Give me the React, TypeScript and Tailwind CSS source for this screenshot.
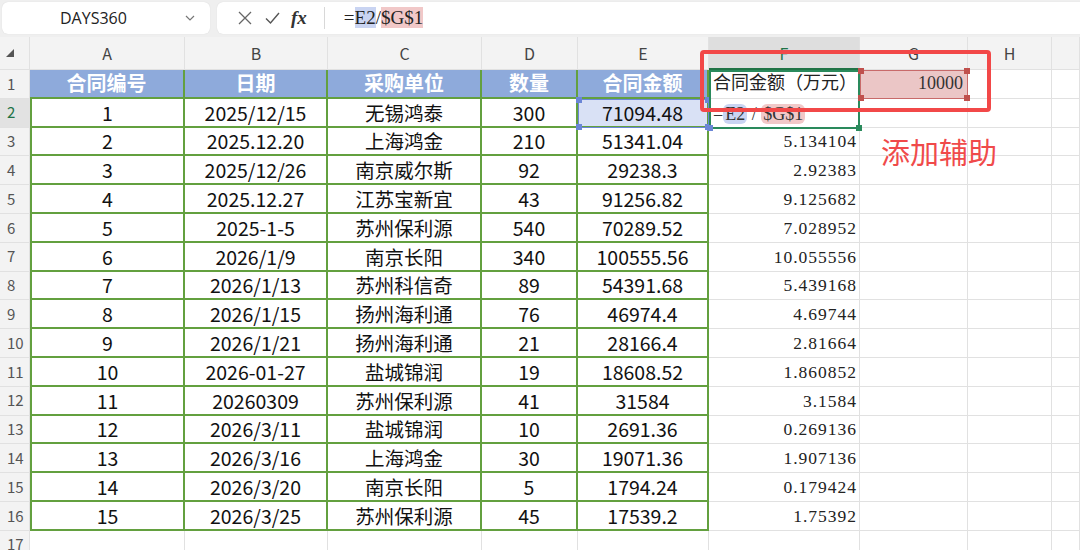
import React from 'react';

type Row = [string, string, string, string, string, string];

const rows: Row[] = [
  ['1', '2025/12/15', '无锡鸿泰', '300', '71094.48', ''],
  ['2', '2025.12.20', '上海鸿金', '210', '51341.04', '5.134104'],
  ['3', '2025/12/26', '南京威尔斯', '92', '29238.3', '2.92383'],
  ['4', '2025.12.27', '江苏宝新宜', '43', '91256.82', '9.125682'],
  ['5', '2025-1-5', '苏州保利源', '540', '70289.52', '7.028952'],
  ['6', '2026/1/9', '南京长阳', '340', '100555.56', '10.055556'],
  ['7', '2026/1/13', '苏州科信奇', '89', '54391.68', '5.439168'],
  ['8', '2026/1/15', '扬州海利通', '76', '46974.4', '4.69744'],
  ['9', '2026/1/21', '扬州海利通', '21', '28166.4', '2.81664'],
  ['10', '2026-01-27', '盐城锦润', '19', '18608.52', '1.860852'],
  ['11', '20260309', '苏州保利源', '41', '31584', '3.1584'],
  ['12', '2026/3/11', '盐城锦润', '10', '2691.36', '0.269136'],
  ['13', '2026/3/16', '上海鸿金', '30', '19071.36', '1.907136'],
  ['14', '2026/3/20', '南京长阳', '5', '1794.24', '0.179424'],
  ['15', '2026/3/25', '苏州保利源', '45', '17539.2', '1.75392'],
];

const sans = { fontFamily: '"Noto Sans CJK SC", "Noto Sans", sans-serif' };
const serif = { fontFamily: '"Liberation Serif", "Noto Sans CJK SC", serif' };

const headers = ['合同编号', '日期', '采购单位', '数量', '合同金额'];
const cols = ['A', 'B', 'C', 'D', 'E', 'F', 'G', 'H', ''];

// grid cell classes
const gray = 'border-r border-b border-[#e1e1e1]';
const green = 'border-r-2 border-b-2 border-[#63a03f]';

const Handle = ({ className }: { className: string }) => (
  <div className={`absolute w-[6px] h-[6px] ${className}`} />
);

export default function App() {
  return (
    <div className="relative w-[1080px] h-[550px] overflow-hidden bg-white text-[#1a1a1a]" style={sans}>
      {/* Toolbar */}
      <div className="flex h-[37px] gap-[7px] bg-[#efefef] pt-[2px] pb-[3px] pl-[2px]">
        <div className="flex w-[208px] items-center rounded-[6px] bg-white pl-[58px] pr-[14px] shadow-[0_0_1px_rgba(0,0,0,0.15)]">
          <span className="flex-1 text-[16px] text-[#222]" style={{ fontFamily: '"Open Sans", "Noto Sans", sans-serif' }}>
            DAYS360
          </span>
          <svg width="12" height="12" viewBox="0 0 12 12" fill="none" stroke="#777" strokeWidth="1.2">
            <path d="M2 4l4 4 4-4" />
          </svg>
        </div>
        <div className="flex flex-1 items-center rounded-l-[6px] bg-white pl-[20px] shadow-[0_0_1px_rgba(0,0,0,0.15)]">
          <svg width="16" height="16" viewBox="0 0 16 16" fill="none" stroke="#666" strokeWidth="1.3">
            <path d="M2 2l12 12M14 2L2 14" />
          </svg>
          <svg className="ml-[11px]" width="17" height="16" viewBox="0 0 17 16" fill="none" stroke="#555" strokeWidth="1.4">
            <path d="M2 8.5l4.5 4.5L15 3" />
          </svg>
          <span className="ml-[10px] text-[19px] font-bold italic text-[#333]" style={serif}>
            fx
          </span>
          <div className="ml-[17px] mr-[19px] h-[22px] w-px bg-[#d8d8d8]" />
          <span className="text-[19px] text-[#222]" style={serif}>
            =<span className="bg-[#c9d4f2]">E2</span>/<span className="bg-[#f1c8c8]">$G$1</span>
          </span>
        </div>
      </div>

      {/* Sheet grid */}
      <div className="grid grid-cols-[30px_155px_143px_154px_96px_131px_151px_108px_84px_1fr] grid-rows-[33px] auto-rows-[28.8px]">
        {/* Column headers */}
        <div className={`${gray} flex items-center bg-[#f3f3f3] pl-[6px]`}>
          <div className="h-0 w-0 border-b-[8px] border-l-[8px] border-b-[#555] border-l-transparent" />
        </div>
        {cols.map((c, i) => (
          <div
            key={i}
            className={
              c === 'F'
                ? 'flex items-center justify-center border-r border-b-2 border-r-[#e1e1e1] border-b-[#217346] bg-[#dedede] text-[16px] text-[#217346]'
                : `${gray} flex items-center justify-center bg-[#f3f3f3] text-[16px] text-[#444]`
            }
          >
            {c}
          </div>
        ))}

        {/* Row 1 */}
        <div className={`${gray} flex items-center bg-[#f3f3f3] pl-[7px] text-[15px] text-[#555]`}>1</div>
        {headers.map((h) => (
          <div key={h} className={`${green} flex items-center justify-center bg-[#8eaadb] text-[20px] font-bold text-white`}>
            {h}
          </div>
        ))}
        <div className={`${gray} flex items-center overflow-hidden whitespace-nowrap pl-[4px] text-[18px] text-[#222]`} style={serif}>
          合同金额（万元）
        </div>
        <div className={`${gray} flex items-center justify-end bg-[#ebc6c6] pr-[4px] text-[18px] text-[#333]`} style={serif}>
          10000
        </div>
        <div className={gray} />
        <div className={gray} />

        {/* Data rows */}
        {rows.map((r, ri) => {
          const n = ri + 2;
          return (
            <React.Fragment key={n}>
              <div
                className={`${gray} flex items-center pl-[7px] text-[15px] ${
                  n === 2 ? 'bg-[#e2e2e2] text-[#217346]' : 'bg-[#f3f3f3] text-[#555]'
                }`}
              >
                {n}
              </div>
              {r.slice(0, 5).map((v, ci) => (
                <div
                  key={ci}
                  className={`${green} ${ci === 0 ? 'border-l-2' : ''} ${
                    n === 2 && ci === 4 ? 'bg-[#d9e1f5]' : ''
                  } flex items-center justify-center text-[19.5px] text-[#111]`}
                >
                  {v}
                </div>
              ))}
              {n === 2 ? (
                <div className={`${gray} overflow-hidden whitespace-nowrap pl-[4px] pt-[5px] text-[18px] leading-[21px] text-[#333]`} style={serif}>
                  =<span className="rounded-[6px] bg-[#c9d4f2] px-[2px]">E2</span> / <span className="rounded-[6px] bg-[#f1c8c8] px-[2px]">$G$1</span>
                </div>
              ) : (
                <div
                  className={`${gray} flex items-center justify-end pr-[2px] text-[17.5px] tracking-[1px] text-[#222]`}
                  style={serif}
                >
                  {r[5]}
                </div>
              )}
              <div className={gray} />
              <div className={gray} />
              <div className={gray} />
            </React.Fragment>
          );
        })}

        {/* Row 17 */}
        <div className={`${gray} flex items-center bg-[#f3f3f3] pl-[7px] text-[15px] text-[#555]`}>17</div>
        {cols.map((c, i) => (
          <div key={i} className={gray} />
        ))}
      </div>

      {/* E2 selection */}
      <div className="absolute left-[578px] top-[98.8px] h-[29px] w-[131px] border border-[#6b86d6]">
        <Handle className="-left-[3px] -top-[3px] bg-[#6b86d6]" />
        <Handle className="-right-[3px] -top-[3px] bg-[#6b86d6]" />
        <Handle className="-bottom-[3px] -left-[3px] bg-[#6b86d6]" />
        <Handle className="-bottom-[3px] -right-[3px] bg-[#6b86d6]" />
      </div>

      {/* F1:F2 active range */}
      <div className="absolute left-[709px] top-[70px] h-[58.8px] w-[151px] border-2 border-[#2a8a5c]">
        <Handle className="-bottom-[4px] -right-[4px] bg-[#2a8a5c]" />
        <Handle className="-bottom-[4px] -left-[4px] bg-[#6b86d6]" />
      </div>

      {/* G1 reference */}
      <div className="absolute left-[860px] top-[70px] h-[29px] w-[108px] border border-[#c86a6a]">
        <Handle className="-left-[3px] -top-[3px] bg-[#c0504d]" />
        <Handle className="-right-[3px] -top-[3px] bg-[#c0504d]" />
        <Handle className="-bottom-[3px] -left-[3px] bg-[#c0504d]" />
        <Handle className="-bottom-[3px] -right-[3px] bg-[#c0504d]" />
      </div>

      {/* Annotation */}
      <div className="absolute left-[700px] top-[50px] h-[62px] w-[291px] rounded-[4px] border-[4px] border-[#f24848]" />
      <div className="absolute left-[881px] top-[131px] text-[29px] leading-[40px] text-[#f04a4a]" style={sans}>
        添加辅助
      </div>
    </div>
  );
}
